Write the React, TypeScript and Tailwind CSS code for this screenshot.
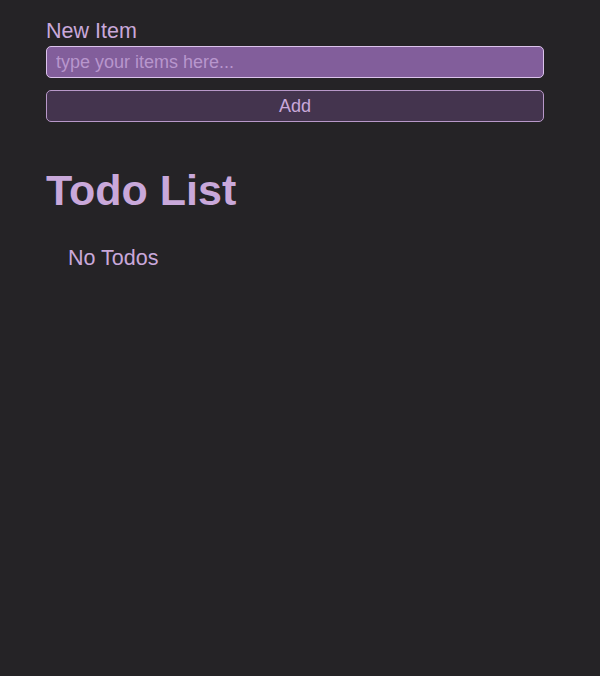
export default function App() {
  return (
    <div className="min-h-screen bg-[#252326] text-[#c9a8da]" style={{ fontFamily: '"Liberation Sans", Arial, sans-serif' }}>
      <div className="ml-[46px] mr-[56px] pt-[18px]">
        <form className="flex flex-col" onSubmit={(e) => e.preventDefault()}>
          <label htmlFor="item" className="text-[21.5px] leading-[26px]">
            New Item
          </label>
          <input
            id="item"
            type="text"
            placeholder="type your items here..."
            className="mt-[2px] h-[32px] rounded-[5px] border-[1.5px] border-[#dcc3ec] bg-[#825e9b] px-[9px] text-[18px] text-[#ead9f4] outline-none placeholder:text-[#b896cd]"
          />
          <button
            type="submit"
            className="mt-[12px] h-[32px] rounded-[5px] border-[1.5px] border-[#b898c9] bg-[#44344e] text-[18px] text-[#c9a8da]"
          >
            Add
          </button>
        </form>

        <h1 className="mt-[42px] text-[43px] font-bold leading-[52px]">Todo List</h1>
        <ul className="mt-[29px] pl-[22px]">
          <li className="text-[21.5px] leading-[26px]">No Todos</li>
        </ul>
      </div>
    </div>
  );
}
